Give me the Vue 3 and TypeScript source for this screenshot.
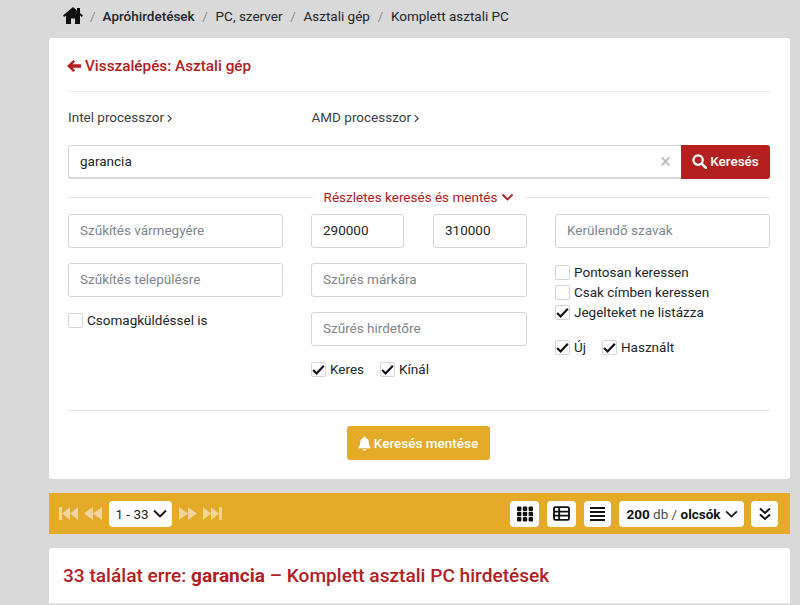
<script setup lang="ts">
const crumbs: string[] = ['PC, szerver', 'Asztali gép', 'Komplett asztali PC']
</script>

<template>
  <div class="page">
    <nav class="crumbs">
      <svg class="home" viewBox="0 0 20 17" width="20" height="17"><path d="M10 0 0 8.600l1.200 1.500L3 8.600V17h5v-5.500h4V17h5V8.600l1.800 1.500L20 8.600l-3-2.600V1h-3v2.400z" fill="#111"/></svg>
      <span class="sep">/</span><b>Apróhirdetések</b>
      <template v-for="c in crumbs" :key="c"><span class="sep">/</span><span>{{ c }}</span></template>
    </nav>

    <section class="card main">
      <h2 class="back">
        <svg viewBox="0 0 14 12" width="14" height="12"><path d="M6.400 0 0 6l6.400 6 1.700-1.800-2.600-2.400H14V4.200H5.500l2.600-2.400z" fill="#b3201f"/></svg>
        Visszalépés: Asztali gép
      </h2>
      <div class="links">
        <span class="link">Intel processzor <svg viewBox="0 0 6 10" width="5" height="9"><path d="m1 1 4 4-4 4" fill="none" stroke="#3a3f44" stroke-width="1.400"/></svg></span>
        <span class="link">AMD processzor <svg viewBox="0 0 6 10" width="5" height="9"><path d="m1 1 4 4-4 4" fill="none" stroke="#3a3f44" stroke-width="1.400"/></svg></span>
      </div>
      <div class="search">
        <div class="search-box"><span>garancia</span><span class="x">×</span></div>
        <button class="search-btn">
          <svg viewBox="0 0 16 16" width="15" height="15"><circle cx="6.500" cy="6.500" r="5" fill="none" stroke="#fff" stroke-width="2.400"/><path d="m10.500 10.500 4.300 4.300" stroke="#fff" stroke-width="2.800" stroke-linecap="round"/></svg>
          Keresés
        </button>
      </div>
      <div class="divider">
        <span class="line"></span>
        <span class="divider-text">Részletes keresés és mentés
          <svg viewBox="0 0 12 8" width="13" height="8"><path d="m1 1.500 5 5 5-5" fill="none" stroke="#b3201f" stroke-width="1.800"/></svg>
        </span>
        <span class="line"></span>
      </div>

      <div class="filters">
        <div class="col">
          <div class="input ph">Szűkítés vármegyére</div>
          <div class="input ph">Szűkítés településre</div>
          <label class="check first"><span class="box"></span>Csomagküldéssel is</label>
        </div>
        <div class="col">
          <div class="pair">
            <div class="input">290000</div>
            <div class="input">310000</div>
          </div>
          <div class="input ph">Szűrés márkára</div>
          <div class="input ph">Szűrés hirdetőre</div>
          <div class="inline-checks kk">
            <label class="check"><span class="box"><svg viewBox="0 0 14 14" width="15" height="15"><path d="m2 7.500 3.200 3.200L12 3.500" fill="none" stroke="#111" stroke-width="2"/></svg></span>Keres</label>
            <label class="check"><span class="box"><svg viewBox="0 0 14 14" width="15" height="15"><path d="m2 7.500 3.200 3.200L12 3.500" fill="none" stroke="#111" stroke-width="2"/></svg></span>Kínál</label>
          </div>
        </div>
        <div class="col">
          <div class="input ph">Kerülendő szavak</div>
          <div class="stack">
            <label class="check"><span class="box"></span>Pontosan keressen</label>
            <label class="check"><span class="box"></span>Csak címben keressen</label>
            <label class="check"><span class="box"><svg viewBox="0 0 14 14" width="15" height="15"><path d="m2 7.500 3.200 3.200L12 3.500" fill="none" stroke="#111" stroke-width="2"/></svg></span>Jegelteket ne listázza</label>
          </div>
          <div class="inline-checks uh">
            <label class="check"><span class="box"><svg viewBox="0 0 14 14" width="15" height="15"><path d="m2 7.500 3.200 3.200L12 3.500" fill="none" stroke="#111" stroke-width="2"/></svg></span>Új</label>
            <label class="check"><span class="box"><svg viewBox="0 0 14 14" width="15" height="15"><path d="m2 7.500 3.200 3.200L12 3.500" fill="none" stroke="#111" stroke-width="2"/></svg></span>Használt</label>
          </div>
        </div>
      </div>

      <div class="save-row">
        <button class="save">
          <svg viewBox="0 0 14 16" width="13" height="15"><path d="M7 .5c-.7 0-1.100.5-1.100 1.100v.6C3.700 2.700 2.400 4.400 2.400 6.500c0 3.200-.8 4.300-1.900 5.500v1h13v-1c-1.100-1.200-1.900-2.300-1.900-5.500 0-2.100-1.300-3.800-3.500-4.300v-.6C8.100 1 7.700.5 7 .5zM5 13.800c0 1 .9 1.800 2 1.800s2-.8 2-1.800z" fill="#fff"/></svg>
          Keresés mentése
        </button>
      </div>
    </section>

    <div class="toolbar">
      <div class="tgroup">
        <svg viewBox="0 0 19 15" width="19" height="15"><path d="M0 1h3v13H0zM3 7.500 11 1v13zM11 7.500 19 1v13z" fill="#f1d59a"/></svg>
        <svg viewBox="0 0 18 15" width="18" height="15"><path d="M0 7.500 9 1v13zM9 7.500 18 1v13z" fill="#f1d59a"/></svg>
        <button class="tbtn pager">1 - 33
          <svg viewBox="0 0 14 9" width="14" height="9"><path d="m1 1.500 6 6 6-6" fill="none" stroke="#111" stroke-width="1.800"/></svg>
        </button>
        <svg viewBox="0 0 18 15" width="18" height="15"><path d="M0 1l9 6.500L0 14zM9 1l9 6.500L9 14z" fill="#f1d59a"/></svg>
        <svg viewBox="0 0 19 15" width="19" height="15"><path d="M0 1l8 6.500L0 14zM8 1l8 6.500L8 14zM16 1h3v13h-3z" fill="#f1d59a"/></svg>
      </div>
      <div class="tgroup right">
        <button class="tbtn w29">
          <svg viewBox="0 0 16 16" width="16" height="16" fill="#111"><rect y="0.500" width="4.400" height="4.400" rx="1"/><rect x="5.800" y="0.500" width="4.400" height="4.400" rx="1"/><rect x="11.600" y="0.500" width="4.400" height="4.400" rx="1"/><rect y="5.800" width="4.400" height="4.400" rx="1"/><rect x="5.800" y="5.800" width="4.400" height="4.400" rx="1"/><rect x="11.600" y="5.800" width="4.400" height="4.400" rx="1"/><rect y="11.100" width="4.400" height="4.400" rx="1"/><rect x="5.800" y="11.100" width="4.400" height="4.400" rx="1"/><rect x="11.600" y="11.100" width="4.400" height="4.400" rx="1"/></svg>
        </button>
        <button class="tbtn w29">
          <svg viewBox="0 0 18 16" width="17" height="15"><rect x="1" y="1.200" width="16" height="13.600" rx="1.500" fill="none" stroke="#111" stroke-width="2"/><path d="M1 6h16M1 10.200h16M6.500 2v12" stroke="#111" stroke-width="2"/></svg>
        </button>
        <button class="tbtn w27">
          <svg viewBox="0 0 15 16" width="15" height="16"><path d="M0 2h15M0 6h15M0 10h15M0 14h15" stroke="#111" stroke-width="2"/></svg>
        </button>
        <button class="tbtn sort"><b>200</b><span class="db">&nbsp;db /&nbsp;</span><b>olcsók</b>
          <svg viewBox="0 0 14 9" width="13" height="8"><path d="m1 1.500 6 6 6-6" fill="none" stroke="#111" stroke-width="1.800"/></svg>
        </button>
        <button class="tbtn w27 last">
          <svg viewBox="0 0 12 14" width="12" height="14"><path d="m1 1.500 5 4.500 5-4.500M1 7.500 6 12l5-4.500" fill="none" stroke="#111" stroke-width="2"/></svg>
        </button>
      </div>
    </div>

    <section class="card result">
      <h1>33 találat erre: <b>garancia</b> – Komplett asztali PC hirdetések</h1>
    </section>
  </div>
</template>

<style>
html, body { margin: 0; background: #d9d9d9; overflow: hidden; }
</style>

<style scoped>
.page {
  width: 800px; height: 605px; box-sizing: border-box; overflow: hidden;
  background: #d9d9d9; padding: 0 10px 0 49px;
  font-family: Roboto, "Liberation Sans", sans-serif; font-size: 13.500px; color: #212529;
}
.crumbs { height: 38px; box-sizing: border-box; padding: 6px 0 0 14px; display: flex; align-items: flex-start; line-height: 20px; font-size: 13.500px; }
.crumbs b { font-weight: 500; }
.home { margin-top: 1px; }
.sep { color: #8a8f94; padding: 0 7.700px; }
.sep:first-of-type { padding: 0 7px; }
.card { background: #fff; border-radius: 3px; }
.main { height: 441px; box-sizing: border-box; padding: 0 20px 0 19px; }
.back { margin: 0; height: 54px; box-sizing: border-box; padding: 19px 0 16px; font-size: 15.300px; line-height: 19px; font-weight: 500; color: #b3201f; border-bottom: 1px solid #e8e8e8; display: flex; align-items: center; gap: 4px; }
.back svg { margin-left: -1px; }
.links { display: grid; grid-template-columns: 243.500px 1fr; height: 53px; align-items: center; padding-bottom: 3px; box-sizing: border-box; color: #3a3f44; }
.link svg { vertical-align: -0.500px; }
.search { display: flex; height: 34px; }
.search-box { flex: 1; border: 1px solid #d6d6d6; border-right: 0; border-bottom-width: 2px; border-radius: 3px 0 0 3px; display: flex; align-items: center; justify-content: space-between; padding: 0 10px 2px 11px; box-sizing: border-box; }
.x { color: #bdbdbd; font-size: 20px; line-height: 20px; }
.search-btn { width: 89px; border: 0; background: #b3201f; color: #fff; font: 500 13.500px Roboto, sans-serif; border-radius: 0 3px 3px 0; display: flex; align-items: center; justify-content: center; gap: 3px; padding: 0 0 2px; }
.divider { display: flex; align-items: center; height: 35px; gap: 11px; padding-top: 1px; box-sizing: border-box; }
.line { flex: 1; height: 1px; background: #e8e8e8; }
.divider-text { color: #b3201f; display: flex; align-items: center; gap: 4px; }
.filters { display: grid; grid-template-columns: 215px 216px 215px; column-gap: 28px; height: 196px; border-bottom: 1px solid #e8e8e8; align-items: start; }
.col { display: flex; flex-direction: column; }
.input { height: 34px; box-sizing: border-box; border: 1px solid #d6d6d6; border-radius: 3px; padding: 0 11px 2px; display: flex; align-items: center; margin-bottom: 15px; }
.ph { color: #7d858c; }
.pair { display: grid; grid-template-columns: 93px 94px; column-gap: 29px; }
.check { display: flex; align-items: center; gap: 4px; height: 20px; }
.check.first { margin-top: -2px; }
.box { width: 15px; height: 15px; border: 1px solid #d6d6d6; border-radius: 2px; display: inline-flex; align-items: center; justify-content: center; box-sizing: border-box; flex: none; }
.box svg { display: block; flex: none; }
.stack { display: flex; flex-direction: column; margin-top: -1px; }
.inline-checks { display: flex; gap: 16px; }
.kk { margin-top: -2px; }
.uh { margin-top: 15px; }
.save-row { display: flex; justify-content: center; padding: 15px 2px 0 0; }
.save { height: 34px; width: 143px; border: 0; border-radius: 3px; background: #e5aa28; color: #fff; font: 500 13.500px Roboto, sans-serif; display: flex; align-items: center; justify-content: center; gap: 3px; padding: 0; }
.toolbar { margin-top: 14px; height: 41px; background: #e5aa28; display: flex; justify-content: space-between; align-items: center; padding: 0 12px 0 10px; }
.tgroup { display: flex; align-items: center; gap: 6px; }
.right { gap: 8px; }
.tbtn { height: 26px; background: #fff; border: 0; border-radius: 4px; font: 13.500px Roboto, sans-serif; color: #212529; display: flex; align-items: center; justify-content: center; padding: 0; }
.pager { width: 63px; gap: 4px; margin: 0 1px; padding-left: 1px; }
.w29 { width: 29px; }
.w27 { width: 27px; }
.sort { width: 125px; color: #111; padding-left: 1px; }
.sort svg { margin-left: 4px; }
.db { color: #4a4f55; }
.last { margin-left: -1px; }
.result { margin-top: 14px; height: 56px; border-bottom: 1px solid #e8e8e8; padding: 15px 14px 0; box-sizing: border-box; border-radius: 3px 3px 0 0; }
.result h1 { margin: 0; font-size: 19.100px; line-height: 26px; font-weight: 500; color: #b3201f; }
.result b { font-weight: 700; }
</style>
